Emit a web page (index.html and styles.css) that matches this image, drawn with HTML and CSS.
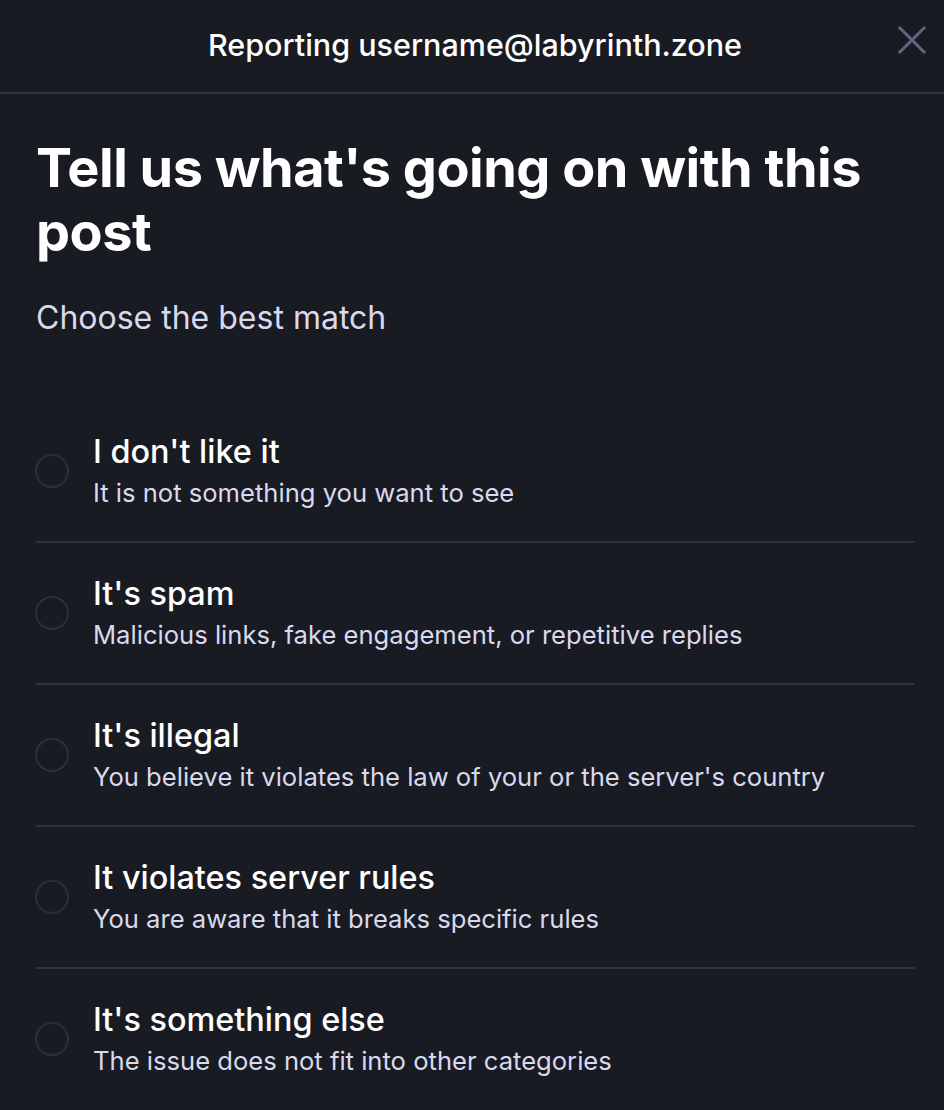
FILE: index.html
```html
<!DOCTYPE html>
<html lang="en">
<head>
<meta charset="utf-8">
<link rel="stylesheet" href="styles.css">
</head>
<body>
<div class="modal">
  <header class="modal-header">
    <h1 class="modal-title">Reporting username@labyrinth.zone</h1>
    <button class="close-btn" aria-label="Close">
      <svg width="30" height="30" viewBox="0 0 30 30"><path d="M3 3 L27 27 M27 3 L3 27" stroke="#5f6480" stroke-width="3" stroke-linecap="square" fill="none"/></svg>
    </button>
  </header>
  <main class="modal-body">
    <h2 class="heading">Tell us what's going on with this post</h2>
    <p class="lead">Choose the best match</p>
    <ul class="options">
      <li class="option">
        <span class="radio"></span>
        <div class="option-text">
          <div class="option-title">I don't like it</div>
          <div class="option-desc">It is not something you want to see</div>
        </div>
      </li>
      <li class="option">
        <span class="radio"></span>
        <div class="option-text">
          <div class="option-title">It's spam</div>
          <div class="option-desc">Malicious links, fake engagement, or repetitive replies</div>
        </div>
      </li>
      <li class="option">
        <span class="radio"></span>
        <div class="option-text">
          <div class="option-title">It's illegal</div>
          <div class="option-desc">You believe it violates the law of your or the server's country</div>
        </div>
      </li>
      <li class="option">
        <span class="radio"></span>
        <div class="option-text">
          <div class="option-title">It violates server rules</div>
          <div class="option-desc">You are aware that it breaks specific rules</div>
        </div>
      </li>
      <li class="option">
        <span class="radio"></span>
        <div class="option-text">
          <div class="option-title">It's something else</div>
          <div class="option-desc">The issue does not fit into other categories</div>
        </div>
      </li>
    </ul>
  </main>
</div>
</body>
</html>
```
FILE: styles.css
```css
html, body {
  margin: 0;
  padding: 0;
  background: #191b22;
  height: 100%;
  overflow: hidden;
}
body {
  font-family: Inter, "Noto Sans", sans-serif;
  color: #ffffff;
}
.modal {
  width: 944px;
}
.modal-header {
  position: relative;
  height: 92px;
  border-bottom: 2px solid #2f3140;
  display: flex;
  align-items: center;
  justify-content: center;
}
.modal-title {
  margin: 0 0 2px;
  font-size: 30.5px;
  font-weight: 500;
  line-height: 40px;
  color: #ffffff;
  padding-left: 6px;
}
.close-btn {
  position: absolute;
  right: 17px;
  top: 25px;
  width: 30px;
  height: 30px;
  padding: 0;
  border: 0;
  background: none;
  display: flex;
}
.modal-body {
  padding: 0 29px 0 36px;
}
.heading {
  margin: 42px 0 0;
  font-size: 54px;
  font-weight: 700;
  line-height: 64px;
  letter-spacing: -0.5px;
}
.lead {
  margin: 34px 0 0;
  font-size: 32px;
  line-height: 40px;
  color: #d9d9ee;
}
.options {
  list-style: none;
  margin: 63px 0 0;
  padding: 0;
}
.option {
  display: flex;
  align-items: center;
  gap: 24px;
  padding: 31px 0;
  border-bottom: 2px solid #2f3140;
}
.option:last-child {
  border-bottom: 0;
}
.radio {
  flex: none;
  width: 30px;
  height: 30px;
  margin-left: -1px;
  border: 2px solid #2c2e3b;
  border-radius: 50%;
}
.option-title {
  font-size: 32.4px;
  font-weight: 500;
  line-height: 40px;
}
.option-desc {
  margin-top: 4px;
  font-size: 25.6px;
  line-height: 34px;
  color: #d9d9ee;
}
```
